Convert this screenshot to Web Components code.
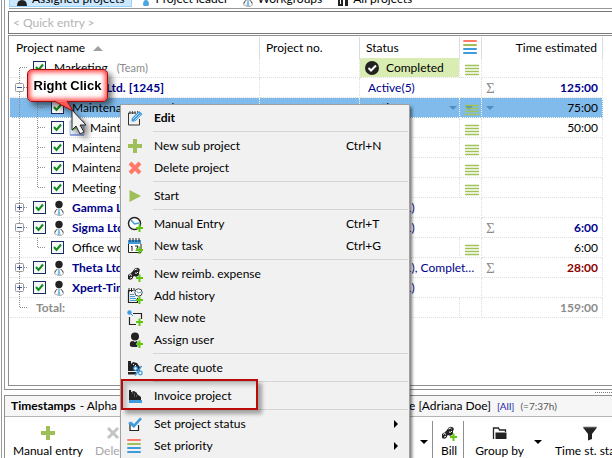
<!DOCTYPE html>
<html lang="en">
<head>
<meta charset="utf-8">
<title>Assigned projects</title>
<style>
html, body { margin: 0; height: 100%; overflow: hidden; background: #fff; }
body { font: 12px/16px Lato, "Open Sans", sans-serif; color: #000; }
</style>
</head>
<body>
<xt-app></xt-app>
<script>
const ADD = '<path d="M11.500 8.500h2v2.500H16v2h-2.500v3h-2v-3H9v-2h2.500z" fill="#62c70e"/>';
const ICONS = {
  plus: [16, 16, '<path d="M6 1h4v5h5v4h-5v5H6v-5H1V6h5z" fill="#9fbf58"/>'],
  cross: [16, 16, '<path d="M3 3l10 10M13 3L3 13" stroke="#ff7a66" stroke-width="4"/>'],
  crossGray: [16, 16, '<path d="M3 3l10 10M13 3L3 13" stroke="#c4c4c4" stroke-width="3"/>'],
  play: [16, 16, '<path d="M2.500 2l11.500 6-11.500 6z" fill="#9fbf58"/>'],
  edit: [16, 16, '<path d="M9 3H1.500v12h11V9" fill="none" stroke="#333" stroke-width="1"/><path d="M3 1v3M5.500 1v3M8 1v3M10.500 1v2" stroke="#333" stroke-width=".8"/><path d="M4 12.500l1-4.500 7-7 3.500 3-7 7z" fill="#3f9bdc"/><path d="M6 9l6-6M7.500 10.500l6-6" stroke="#d6ecfb" stroke-width=".8"/><path d="M4 12.500l.5-2L6 12z" fill="#fff"/>'],
  clock: [16, 16, '<circle cx="7.500" cy="7.500" r="6" fill="#fff" stroke="#222" stroke-width="1.500"/><path d="M4 4l3.500 4L12 7" fill="none" stroke="#3f9bdc" stroke-width="1.500"/>' + ADD],
  calendar: [16, 16, '<path d="M1 2h13v4H1z" fill="#3f9bdc"/><path d="M3 0v4M6 0v4M9 0v4M12 0v4" stroke="#222"/><path d="M1.500 6v8.500H14V6" fill="#fff" stroke="#222"/><path d="M4 9l1-1v5M8 8h3l-2 5" fill="none" stroke="#222"/>' + ADD],
  coins: [16, 16, '<g fill="#222"><path d="M1 9q3-3 5-1v4q-2 3-5 1z"/><path d="M6 5q2-4 5-3t1 4v3q-2 3-5 1z"/><path d="M4 7l3-3 2 4-3 3z"/></g><path d="M2 9.500q2-2 3 0M7.500 4q2-2 3 0M8 7q2 1 3-1M3 12q1 0 2-1" fill="none" stroke="#fff" stroke-width="1"/>' + ADD],
  history: [16, 16, '<path d="M1.500 3v11.500h9V10M1 2.500h5" fill="none" stroke="#222" stroke-width="1.200"/><path d="M2 0v4M4.500 0v4M7 0v3" stroke="#222"/><path d="M3 6.500h4M3 8.500h5M3 10.500h6M3 12.500h6" stroke="#3f9bdc"/><circle cx="11.500" cy="4.500" r="3.700" fill="#fff" stroke="#444"/><path d="M9.500 3l2 2 2.500-1" fill="none" stroke="#3f9bdc"/>' + ADD],
  note: [16, 16, '<path d="M2.500 7v7.500H9M6 3.500h8.500V9" fill="none" stroke="#222" stroke-width="1.200"/><circle cx="2.500" cy="2.500" r="2.200" fill="#3f9bdc"/><path d="M3 3l3 3" stroke="#3f9bdc"/>' + ADD],
  user: [16, 16, '<circle cx="8" cy="4.500" r="4" fill="#222"/><path d="M3 14q-1-5 3-5l2 1 2-1q2 0 3 1v5H6q-2 0-3-1z" fill="#222"/><path d="M10 8.500h5v7h-5z" fill="#f1f1f1" opacity=".7"/>' + ADD],
  quote: [16, 16, '<path d="M1 1h3v3l2-2 4 1 2 3 1 1v4H1z" fill="#222"/><path d="M1 12h8v2.500H1z" fill="#222"/><path d="M6 4.500h1M8 5.500h1M7 7h1" stroke="#fff"/><path d="M14.500 6L8 15.500" stroke="#3f9bdc" stroke-width="1.500"/><circle cx="8.500" cy="8.500" r="1.800" fill="#fff" stroke="#3f9bdc" stroke-width="1.300"/><circle cx="13.300" cy="13" r="1.800" fill="#fff" stroke="#3f9bdc" stroke-width="1.300"/>'],
  invoice: [16, 16, '<path d="M2 2h2v2l3-1 3 2v1l4 3v3H2z" fill="#222"/><path d="M5 5h1M7 6h1M9 8h1M7 8h1" stroke="#aaa" stroke-width=".8"/><path d="M2 12h13v3H2z" fill="#3f9bdc"/>'],
  check: [16, 16, '<path d="M3 8v6.500h8.500V9" fill="#fff" stroke="#222" stroke-width="1.200"/><path d="M1 7l3-1.500L7 8l6-6.500L15 3l-8 9z" fill="#3f9bdc"/>'],
  bars: [14, 17, '<g stroke-width="2" stroke-linecap="round"><path d="M1 2h12" stroke="#ff7a66"/><path d="M1 6h12" stroke="#9fc058"/><path d="M1 10h12M1 14h12" stroke="#3f9bdc"/></g>'],
  priority: [14, 12, '<path d="M.5 1.500h13M.5 4.500h13M.5 7.500h13M.5 10.500h13" stroke="#a0c256" stroke-width="1.500" stroke-linecap="round"/>'],
  person: [10, 16, '<path d="M.7 14q-.5-5 4.300-5t4.300 5q-2 2-4.300 1.500T.7 14z" fill="#fff" stroke="#999" stroke-width=".8"/><path d="M1 12.500q.2-2 2-3M9 12.500q-.2-2-2-3" fill="none" stroke="#555" stroke-width="1"/><path d="M4.200 9.500h1.600l.6 5.500H3.600z" fill="#7cbce8"/><circle cx="5" cy="4.500" r="3.700" fill="#222"/>'],
  done: [14, 14, '<circle cx="7" cy="7" r="7" fill="#222"/><path d="M3.500 7l2.500 2.500L11 4.500" fill="none" stroke="#fff" stroke-width="2"/>'],
  picture: [16, 16, '<path d="M1 1h14v14H1z" fill="#e7f0fb" stroke="#b3bfe6"/><path d="M3 5l5 3-5 3z" fill="#58bb2f"/><path d="M1 15h14" stroke="#5a78d8"/>'],
  folder: [16, 16, '<path d="M1.500 14V3h5l1 2h6v2" fill="none" stroke="#222" stroke-width="1.300"/><path d="M3.500 7.500h11V14h-11z" fill="#222"/>'],
  funnel: [16, 16, '<path d="M1 2.500h14L10 9v5l-4 1.500V9z" fill="#222"/><path d="M1.500 2.500h13" stroke="#555" stroke-width="1.500"/>'],
  down: [8, 4, '<path d="M0 0h8l-4 4z" fill="currentColor"/>'],
  up: [10, 5, '<path d="M0 5h10L5 0z" fill="#a0a0a0"/>'],
  right: [5, 8, '<path d="M0 0l4 4-4 4z" fill="#000"/>'],
  group: [12, 16, '<path d="M1 5h5v10H1zM8 3h3v12H8z" fill="#222"/><path d="M3 9h1v4H3z" fill="#fff"/>'],
  darkUser: [12, 16, '<circle cx="6" cy="5" r="4" fill="#222"/><path d="M1 15q0-6 5-6t5 6z" fill="#222"/>'],
  blueUser: [12, 16, '<circle cx="6" cy="4" r="3.500" fill="#222"/><path d="M3 14q0-5 3-5t3 5l-1 1H4z" fill="#4ca6e0"/>']
};

class XtElement extends HTMLElement {
  constructor() { super(); this.attachShadow({ mode: "open" }); }
  connectedCallback() { this.shadowRoot.innerHTML = this.render(); }
  attr(name) { return this.getAttribute(name) || ""; }
}

customElements.define("xt-icon", class extends XtElement {
  render() {
    const [w, h, body] = ICONS[this.attr("name")];
    return `<style>:host{display:inline-block;flex:none;width:${w}px;height:${h}px}svg{display:block}</style>
      <svg width="${w}" height="${h}" viewBox="0 0 ${w} ${h}" aria-hidden="true">${body}</svg>`;
  }
});

customElements.define("xt-tab", class extends XtElement {
  render() {
    return `<style>
      :host{display:block}
      button{display:flex;align-items:center;gap:4px;height:22px;padding:6px 6px 0;border:1px solid transparent;background:none;font:inherit;color:inherit;white-space:nowrap}
      :host([active]) button{background:#cce8ff;border-color:#99d1ff}
      </style><button type="button"><xt-icon name="${this.attr("icon")}"></xt-icon><slot></slot></button>`;
  }
});

/* One 18px column of the tree's guide lines: up, down, branch, and an optional expander */
function guide({ up, down, branch, box }) {
  let s = "";
  const dots = 'stroke="#8c8c8c" stroke-dasharray="1 1"';
  if (up) s += `<path d="M9.500 0V10" ${dots}/>`;
  if (down) s += `<path d="M9.500 10V20" ${dots}/>`;
  if (branch) s += `<path d="M10 9.500H18" ${dots}/>`;
  if (box) s += `<rect x="5.500" y="5.500" width="8" height="8" rx="1" fill="#fbfbfb" stroke="#999"/><path d="M7 9.500h5${box === "+" ? "M9.500 7v5" : ""}" stroke="#3a539b"/>`;
  return `<svg width="18" height="20" viewBox="0 0 18 20" aria-hidden="true">${s}</svg>`;
}

const ROWS = [
  { name: "Marketing", note: "(Team)", g: [{ down: 1, branch: 1 }], status: "done", prio: 1 },
  { name: "Alpha Ltd. [1245]", group: 1, g: [{ up: 1, down: 1, branch: 1, box: "-" }], status: "Active(5)", sum: 1, time: "125:00" },
  { name: "Maintenance Template #2003", sel: 1, g: [{ up: 1, down: 1 }, { up: 1, down: 1, branch: 1 }], status: "Active", prio: 1, time: "75:00" },
  { name: "Maintenance", icon: "picture", g: [{ up: 1, down: 1 }, { up: 1, down: 1, branch: 1 }], prio: 1, time: "50:00" },
  { name: "Maintenance", g: [{ up: 1, down: 1 }, { up: 1, down: 1, branch: 1 }], prio: 1 },
  { name: "Maintenance", g: [{ up: 1, down: 1 }, { up: 1, down: 1, branch: 1 }], prio: 1 },
  { name: "Meeting with", g: [{ up: 1, down: 1 }, { up: 1, branch: 1 }], prio: 1 },
  { name: "Gamma Ltd.", group: 1, g: [{ up: 1, down: 1, branch: 1, box: "+" }], status: "Active(1)" },
  { name: "Sigma Ltd.", group: 1, g: [{ up: 1, down: 1, branch: 1, box: "-" }], status: "Active(1)", sum: 1, time: "6:00" },
  { name: "Office work", g: [{ up: 1, down: 1 }, { up: 1, branch: 1 }], prio: 1, time: "6:00" },
  { name: "Theta Ltd.", group: 1, g: [{ up: 1, down: 1, branch: 1, box: "+" }], status: "Active(1), Completed(1)", sum: 1, time: "28:00", over: 1 },
  { name: "Xpert-Timer", group: 1, g: [{ up: 1, down: 1, branch: 1, box: "+" }], status: "Active(1)" },
  { name: "Total:", total: 1, g: [{ up: 1, branch: 1 }], time: "159:00" }
];

customElements.define("xt-project-grid", class extends XtElement {
  row(r, i) {
    const cls = [r.group && "group", r.sel && "sel", r.total && "total", r.over && "over"].filter(Boolean).join(" ");
    const drop = r.sel ? '<xt-icon name="down"></xt-icon>' : "";
    const icon = r.group ? '<xt-icon name="person"></xt-icon>' : r.icon ? `<xt-icon name="${r.icon}" class="pic"></xt-icon>` : "";
    const box = r.total ? "" : `<input type="checkbox" id="r${i}" checked>`;
    const name = r.total ? `<span>${r.name}</span>` : `<label for="r${i}">${r.name}</label>`;
    const note = r.note ? `<small>${r.note}</small>` : "";
    const status = r.status === "done"
      ? '<div class="cell done"><xt-icon name="done"></xt-icon>Completed</div>'
      : `<div class="cell status"><span>${r.status || ""}</span>${drop}</div>`;
    const prio = r.group ? "" : `<td><div class="cell prio">${drop}${r.prio ? '<xt-icon name="priority" class="p"></xt-icon>' : ""}</div></td>`;
    return `<tr class="${cls}"><td><div class="cell name">${r.g.map(guide).join("")}${box}${icon}${name}${note}</div></td><td></td>
      <td${r.group ? ' colspan="2"' : ""}>${status}</td>${prio}
      <td><div class="cell time">${drop}${r.sum ? "<i>Σ</i>" : ""}<span>${r.time || ""}</span></div></td></tr>`;
  }
  render() {
    return `<style>
      :host{display:block;flex:1;border:1px solid #8f8f8f;border-right:0;padding:1px 9px 0 1px;overflow:hidden}
      table{width:100%;table-layout:fixed;border-spacing:0;border-collapse:separate}
      .c2,.c3{width:100px}.c4{width:22px}.c5{width:121px}
      th{height:21px;padding:0 6px;text-align:left;font-weight:400;border-right:1px solid #dcdcdc;vertical-align:middle;white-space:nowrap}
      th.i{padding:0 3px}th.i xt-icon{vertical-align:middle}
      th:last-child{text-align:right;padding-right:5px}
      th xt-icon[name=up]{margin-left:8px;vertical-align:middle}
      td{height:19px;padding:0;border-right:1px dotted #dedede;border-bottom:1px dotted #dedede}
      .cell{display:flex;align-items:center;height:19px;white-space:nowrap;overflow:hidden}
      svg{flex:none;align-self:flex-start}
      input{appearance:none;flex:none;width:13px;height:13px;margin:0 8px 0 5px;border:1px solid #1b2a60;background:#f6f8f6 url('data:image/svg+xml,<svg xmlns="http://www.w3.org/2000/svg" width="11" height="11"><path d="M2 5l2.500 3L9 2.500" fill="none" stroke="%23108a1c" stroke-width="2"/></svg>')}
      xt-icon[name=person]{margin-right:8px}
      .pic{margin:0 5px 0 -3px}
      small{font-size:11px;color:#8a8a8a;margin-left:9px}
      .group{color:#00008b}.group label,.group .time span,.total{font-weight:700}
      .total{color:#8c8c8c}.total .name span{margin-left:8px}.over .time span{color:#8b0000}
      .sel td{background:#80bbeb;border-color:#fff}.sel xt-icon[name=down]{color:#4f8fc0}
      .status{padding:0 4px 0 8px;justify-content:space-between}.status span{overflow:hidden;text-overflow:ellipsis}
      .sel .status{padding-right:2px}
      .done{background:#d9ecb2;padding-left:5px;gap:7px}
      .prio{justify-content:flex-end;padding-right:2px}.prio xt-icon[name=down]{margin-right:-8px}
      .p{margin-top:4px}
      .time{padding:0 4px}.time span{margin-left:auto}
      i{font:15px/16px "Liberation Serif",serif;color:#8c8c8c}
      </style>
      <table><colgroup><col><col class="c2"><col class="c3"><col class="c4"><col class="c5"></colgroup>
      <thead><tr><th>Project name<xt-icon name="up"></xt-icon></th><th>Project no.</th><th>Status</th><th class="i"><xt-icon name="bars"></xt-icon></th><th>Time estimated</th></tr></thead>
      <tbody>${ROWS.map((r, i) => this.row(r, i)).join("")}</tbody></table>`;
  }
});

customElements.define("xt-tool", class extends XtElement {
  render() {
    return `<style>
      :host{display:flex;flex:none;align-items:center;gap:10px}
      button{display:flex;flex-direction:column;align-items:center;gap:2px;padding:0;border:0;background:none;font:inherit;color:inherit;white-space:nowrap}
      :host([disabled]){color:#a6a6a6}
      </style><button type="button"${this.hasAttribute("disabled") ? " disabled" : ""}><xt-icon name="${this.attr("icon")}"></xt-icon><slot></slot></button>${this.hasAttribute("drop") ? '<xt-icon name="down"></xt-icon>' : ""}`;
  }
});

customElements.define("xt-timestamps", class extends XtElement {
  render() {
    return `<style>
      :host{display:block;flex:none;border:1px solid #8f8f8f;border-width:1px 0 0 1px;background:#fff;overflow:hidden}
      header{display:flex;align-items:center;height:20px;padding:0 6px;background:#f6f6f6;border-bottom:1px solid #b4b4b4;white-space:nowrap}
      header b{margin-right:4px}
      .a{flex:none;width:328px}
      .u{flex:none;width:152px;text-align:right}
      small{font-size:10px;margin-left:6px;color:#555}small.n{color:#1c1ca8}
      nav{display:flex;align-items:flex-start;height:33px;padding:8px 0 0 8px}
      .left{display:flex;flex:none;gap:12px;width:407px}
      nav>xt-icon{margin-top:15px}
      hr{flex:none;width:1px;height:40px;margin:-4px 8px 0 4px;border:0;background:#8f8f8f}
      hr.b{margin:-4px 11px 0 6px}
      [drop]{margin-right:13px}
      </style>
      <header><span class="a"><b>Timestamps</b>- Alpha Ltd. [1245]</span><span class="u">Adriana Doe [Adriana Doe]</span><small class="n">[All]</small><small>(=7:37h)</small></header>
      <nav><div class="left"><xt-tool icon="plus">Manual entry</xt-tool><xt-tool icon="crossGray" disabled>Delete</xt-tool></div>
      <xt-icon name="down"></xt-icon><hr><xt-tool icon="coins">Bill</xt-tool><hr class="b">
      <xt-tool icon="folder" drop>Group by</xt-tool><xt-tool icon="funnel">Time st. sta…</xt-tool></nav>`;
  }
});

customElements.define("xt-menu-item", class extends XtElement {
  render() {
    return `<style>
      :host{display:block;position:relative}
      button{display:grid;grid-template-columns:30px 192px 1fr auto;align-items:center;width:100%;height:22px;padding:0 9px 0 2px;border:0;background:none;font:inherit;color:inherit;text-align:left;white-space:nowrap}
      button>xt-icon:first-child{justify-self:start;margin-left:3px}
      :host([strong]){font-weight:700}
      :host([framed])::after{content:"";position:absolute;left:-1px;top:-6px;width:133px;height:27px;border:2px solid #bb0a0a;box-shadow:4px 4px 4px #0005,inset 4px 4px 4px #0003}
      </style><button type="button" role="menuitem"><xt-icon name="${this.attr("icon")}"></xt-icon><span><slot></slot></span><span>${this.attr("keys")}</span>${this.hasAttribute("sub") ? '<xt-icon name="right"></xt-icon>' : ""}</button>`;
  }
});

customElements.define("xt-menu", class extends XtElement {
  render() {
    return `<style>
      :host{display:block;position:absolute;left:120px;top:104px;width:286px;padding:2px 1px;border:1px solid #a0a0a0;background:#f1f1f1;box-shadow:2px 3px 3px #0008}
      ::slotted(hr){height:1px;margin:2px 0 3px 31px;border:0;background:#d5d5d5}
      </style><slot></slot>`;
  }
});

customElements.define("xt-callout", class extends XtElement {
  render() {
    return `<style>
      :host{display:block;position:absolute;left:27px;top:69px;filter:drop-shadow(4px 4px 3px #0008)}
      .b{box-sizing:border-box;width:81px;height:33px;border:1px solid #a00c0c;border-radius:5px;background:#fff;box-shadow:inset 0 0 5px 2px #ff3c3c;font:bold 13px/31px "Liberation Sans",sans-serif;text-align:center;white-space:nowrap}
      .tail{position:absolute;left:26px;top:31px}
      .arrow{position:absolute;left:44px;top:40px}
      svg{display:block}
      </style><div class="b"><slot></slot></div>
      <svg class="tail" width="22" height="12"><path d="M1 1l19 10L14 1" fill="#f55" stroke="#a00c0c"/><path d="M3 0h10v2H5z" fill="#ff7070"/></svg>
      <svg class="arrow" width="18" height="26" viewBox="0 0 18 26"><path d="M1 1v20l4-4 4 8 4-2-4-7h6z" fill="#f4f4f4" stroke="#222"/></svg>`;
  }
});

customElements.define("xt-app", class extends XtElement {
  render() {
    return `<style>
      :host{display:flex;flex-direction:column;height:100vh;overflow:hidden;position:relative;box-sizing:border-box;padding-left:4px;background:linear-gradient(90deg,#fff 1px,#999 1px 2px,#fff 2px)}
      .main{display:flex;flex-direction:column;flex:1;min-height:0;border-left:1px solid #999;border-bottom:1px solid #8f8f8f;padding:0 0 3px 3px}
      .tabs{display:flex;gap:1px;height:22px;margin:-15px 0 0 1px;padding-bottom:1px;border-bottom:1px solid #999}
      input{box-sizing:border-box;width:100%;height:23px;margin:2px 0 1px;padding:0 4px;border:1px solid #777;border-right:0;background:#fff;font:inherit;color:#000;outline:0}
      input::placeholder{color:#b4b4b4;opacity:1}
      .split{display:flex;flex:none;align-items:center;height:5px}
      .split::after{content:"";width:17px;margin-left:auto;border-top:1px dotted #777}
      </style>
      <div class="main">
      <div class="tabs"><xt-tab icon="darkUser" active>Assigned projects</xt-tab><xt-tab icon="blueUser">Project leader</xt-tab><xt-tab icon="person">Workgroups</xt-tab><xt-tab icon="group">All projects</xt-tab></div>
      <input type="text" aria-label="Quick entry" placeholder="&lt; Quick entry &gt;">
      <xt-project-grid></xt-project-grid></div>
      <div class="split"></div>
      <xt-timestamps></xt-timestamps>
      <xt-menu role="menu">
        <xt-menu-item icon="edit" strong>Edit</xt-menu-item><hr>
        <xt-menu-item icon="plus" keys="Ctrl+N">New sub project</xt-menu-item>
        <xt-menu-item icon="cross">Delete project</xt-menu-item><hr>
        <xt-menu-item icon="play">Start</xt-menu-item><hr>
        <xt-menu-item icon="clock" keys="Ctrl+T">Manual Entry</xt-menu-item>
        <xt-menu-item icon="calendar" keys="Ctrl+G">New task</xt-menu-item><hr>
        <xt-menu-item icon="coins">New reimb. expense</xt-menu-item>
        <xt-menu-item icon="history">Add history</xt-menu-item>
        <xt-menu-item icon="note">New note</xt-menu-item>
        <xt-menu-item icon="user">Assign user</xt-menu-item><hr>
        <xt-menu-item icon="quote">Create quote</xt-menu-item><hr>
        <xt-menu-item icon="invoice" framed>Invoice project</xt-menu-item><hr>
        <xt-menu-item icon="check" sub>Set project status</xt-menu-item>
        <xt-menu-item icon="bars" sub>Set priority</xt-menu-item>
      </xt-menu>
      <xt-callout>Right Click</xt-callout>`;
  }
});
</script>
</body>
</html>
